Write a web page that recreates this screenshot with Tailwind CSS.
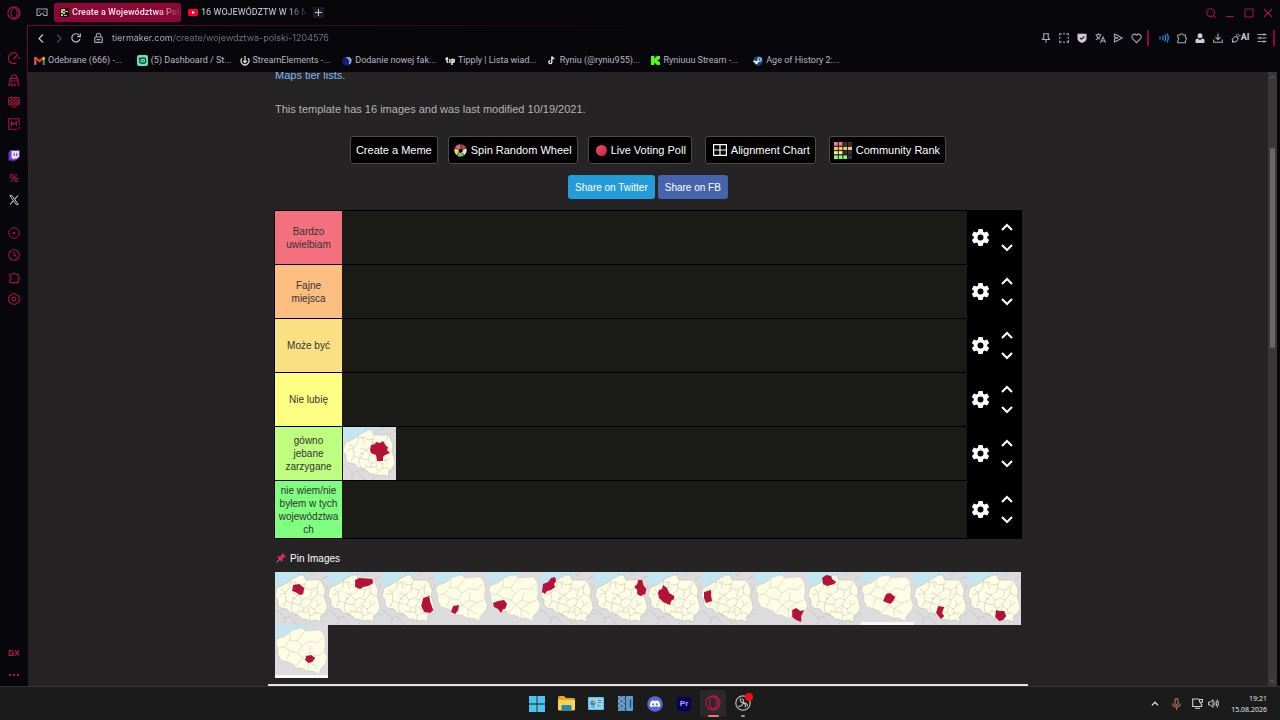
<!DOCTYPE html>
<html lang="pl">
<head>
    <meta charset="UTF-8">
    <meta name="viewport" content="width=device-width, initial-scale=1.0">
    <title>Create a Województwa Polski Tier List</title>
    <script src="https://cdn.jsdelivr.net/npm/@tailwindcss/browser@4"></script>
</head>
<body class="h-screen flex flex-col overflow-hidden bg-[#07060b] font-['Liberation_Sans',Arial,sans-serif]">

    <!-- Shared shapes -->
    <svg class="hidden" aria-hidden="true">
        <symbol id="opera" viewBox="0 0 16 16">
            <g fill="none" stroke="currentColor"><circle cx="8" cy="8" r="7" stroke-width="1.3"/><ellipse cx="8" cy="8" rx="3.4" ry="6" stroke-width="1.2"/><path d="M9 1.3c3 1 4.5 3.500 4.500 6.700S12 13.700 9 14.700" stroke-width="1"/></g>
        </symbol>
        <symbol id="puzzle" viewBox="0 0 14 14">
            <path d="M2 3.500h2.700a2 2 0 0 1 3.800 0H11v2.700a2 2 0 0 1 0 3.600v2.700H2V9.800a1.900 1.900 0 0 0 0-3.600z" fill="none" stroke="currentColor" stroke-width="1.200" stroke-linejoin="round"/>
        </symbol>
        <symbol id="gear" viewBox="0 0 24 24">
            <path fill="currentColor" fill-rule="evenodd" d="M9 0h6l.700 3.800 2 1.100L21.400 3.600l2.900 5-2.900 2.500v2l2.900 2.400-2.900 5-3.700-1.300-2 1.100L15 24H9l-.700-3.700-2-1.100-3.700 1.300-2.900-5L2.600 13v-2L-.3 8.600l2.900-5 3.700 1.300 2-1.100zM12 7.800a4.200 4.200 0 1 0 0 8.400 4.200 4.200 0 0 0 0-8.400z"/>
        </symbol>
        <symbol id="up" viewBox="0 0 12 8"><path d="M1 7l5-5 5 5" fill="none" stroke="currentColor" stroke-width="2"/></symbol>
        <symbol id="down" viewBox="0 0 12 8"><path d="M1 1l5 5 5-5" fill="none" stroke="currentColor" stroke-width="2"/></symbol>
        <symbol id="map" viewBox="0 0 53 53" preserveAspectRatio="none">
            <path fill="#dcdcde" d="M0 0h53v53H0z"/>
            <path fill="#c3e6f3" d="M0 0h36l-3 3-5-1-9 4-8 5-11 2z"/>
            <path fill="none" stroke="#b9b9bd" stroke-width=".5" d="M0 38l5 3 4 5 6-2 7 9M29 53l3-3M35 4l6-4M46 7l7-3M51 18l2-6M8 53l3-7M50 43l3-2"/>
            <path fill="#fdfde6" stroke="#a9a99c" stroke-width=".4" d="M2 16l8-4 9-6 6-3 4 0 1 4 3 1 12 0 2 3 3 7-1 6 2 7 1 5-2 4-5 5 1 5-5-2-6 1-5-2-3 0-3-3-5-3-4 0-3-4-6-1-3-3 0-5-3-4 1-4z"/>
            <path fill="none" stroke="#aaa99a" stroke-width=".5" stroke-dasharray="1.600 .6" d="M15 9l0 6-5 6-6 2M15 11l6-1 3 3 6-1 2-4M30 12l-1 7-6 4-6-2M29 16l7 2 6-3 3-6M42 15l0 6 7 4M10 21l1 8 6 2 2-5 4-3M11 29l-3 6M17 31l-1 5 2 5M23 23l4 5-2 5-8-2M27 28l5-2 5 2 4-5 2-2M25 33l4 3 5-2 3-6M29 36l-2 4-4-1-3 5M27 40l6 0 2 4-1 5M34 34l5 3 1 4-5 3M39 37l4-4-2-5M40 41l5 0 3 4M20 10l1 7M6 17l5 4M21 27l-4-1M37 18l-2 7M33 36l1 4M47 31l-5 3"/>
        </symbol>
        <symbol id="map-wide" viewBox="0 0 53 53" preserveAspectRatio="none">
            <path fill="#dcdcde" d="M0 0h53v53H0z"/>
            <path fill="#c3e6f3" d="M0 0h34l-4 3-11 2-9 4-10 2z"/>
            <path fill="#fdfde6" stroke="#bebdad" stroke-width=".3" d="M2 14l8-3 8-6 8-2 5 3 14-1 4 5 1 10-1 6 3 7-2 6-5 5-1 5-6-3-6 0-5-3-5 0-4-4-7-3-5-1-3-6 0-6-2-5z"/>
            <path fill="none" stroke="#d0ceba" stroke-width=".6" d="M15 8l0 7-6 7-5 1M15 15l7 1 4-5 4-5M22 16l5 5-4 7-8-2-6-4M27 21l7-5 8 2 5-6M34 28l7 3 7-3M23 28l4 5 7-5 1-7M15 26l-3 8M27 33l-6 8M27 33l6 4 8-6M33 37l0 8M33 37l9 5"/>
        </symbol>
    </svg>

    <div class="flex flex-1 min-h-0">

        <!-- Opera sidebar -->
        <aside class="w-7 shrink-0 flex flex-col items-center text-[#a51640]">
            <button aria-label="Opera menu" class="h-[25px] flex items-center"><svg class="size-[14px]"><use href="#opera"/></svg></button>
            <nav class="flex-1 flex flex-col items-center pt-[22px]">
                <button aria-label="Speed dial" class="h-[22px] flex items-center"><svg class="size-3" viewBox="0 0 12 12" fill="none" stroke="currentColor" stroke-width="1.100"><path d="M9 1.900A5.300 5.300 0 1 0 8.500 10.800M5 7l5-4.500M11.200 5v2"/></svg></button>
                <button aria-label="GX Cleaner" class="h-[22px] flex items-center"><svg class="size-3" viewBox="0 0 12 12" fill="none" stroke="currentColor" stroke-width="1.100"><path d="M3 4.500L4 1h4l1 3.500M2 4.500h8v2.500H2zM2 7L.8 11.200H8M10 7l1 4.200M4 9v2M7 9v2M9.500 11.200h2"/></svg></button>
                <button aria-label="Wallpaper" class="h-[22px] flex items-center"><svg class="size-3" viewBox="0 0 12 12" fill="none" stroke="currentColor" stroke-width="1.100"><rect x=".7" y="1.500" width="10.600" height="7.500" rx="1"/><path d="M1 6l4-4M2 8.500L8.500 2M5 8.500L11 3M8 8.500l3-2.500M3.500 11h5"/></svg></button>
                <button aria-label="Mods" class="h-[22px] flex items-center"><svg class="size-3" viewBox="0 0 12 12" fill="none" stroke="currentColor" stroke-width="1.100"><path d="M9 11.300H.8V.8h10.400V7M11.200 9v2.300M3.500 8V4l2.500 2.500L8.500 4v4"/></svg></button>
                <button aria-label="Twitch" class="h-[22px] mt-[10px] flex items-center"><svg class="size-3" viewBox="0 0 12 12"><path fill="#6b35d0" d="M2.500 0H12v7L8 10.500H6L4.500 12v-1.500H.5v-8z"/><path fill="#ece6fa" d="M3.500 1h7.500v5.500L9 8.500H7L5.500 10V8.500h-2z"/><path stroke="#6b35d0" stroke-width="1.100" d="M6.200 3v3M8.800 3v3"/></svg></button>
                <button aria-label="Deals" class="h-[22px] flex items-center"><svg class="size-[10px]" viewBox="0 0 12 12" fill="none" stroke="currentColor" stroke-width="1.300"><circle cx="3.300" cy="3.600" r="2"/><circle cx="8.700" cy="8.400" r="2"/><path d="M9.500 1.500l-7 9"/></svg></button>
                <button aria-label="X" class="h-[22px] flex items-center"><svg class="size-[10px]" viewBox="0 0 12 12" fill="none" stroke="#c9c9cd"><path d="M1 .8h2.600l7.500 10.400H8.500z" stroke-width="1.200"/><path d="M10.800.6L6.900 5M5.200 7L1.200 11.400" stroke-width="1.300"/></svg></button>
                <button aria-label="Player" class="h-[22px] mt-[11px] flex items-center"><svg class="size-3" viewBox="0 0 12 12"><circle cx="6" cy="6" r="5.300" fill="none" stroke="currentColor"/><circle cx="6" cy="6" r="1.300" fill="currentColor"/></svg></button>
                <button aria-label="History" class="h-[22px] flex items-center"><svg class="size-3" viewBox="0 0 12 12" fill="none" stroke="currentColor" stroke-width="1.100"><circle cx="6" cy="6" r="5.300"/><path d="M6 2.500V6l2.500 1.500"/></svg></button>
                <button aria-label="Extensions" class="h-[22px] flex items-center"><svg class="size-[13px]"><use href="#puzzle"/></svg></button>
                <button aria-label="Settings" class="h-[22px] flex items-center"><svg class="size-3" viewBox="0 0 12 12" fill="none" stroke="currentColor" stroke-width="1.100"><path d="M4.500.7h3l1 1.400 1.700.2 1.300 2.400L11 6l.5 1.300-1.300 2.400-1.700.2-1 1.400h-3l-1-1.400-1.700-.2L.5 7.300 1 6 .5 4.700l1.300-2.400 1.700-.2z"/><circle cx="6" cy="6" r="1.900"/></svg></button>
            </nav>
            <button aria-label="GX Corner" class="h-[22px] flex items-center"><svg class="w-3 h-2" viewBox="0 0 12 8" fill="none" stroke="currentColor" stroke-width="1.300"><path d="M5.500 1.700H1.200v4.600h4V4H3.500M7 1.500l4 5M11 1.500l-4 5"/></svg></button>
            <button aria-label="More" class="h-[22px] flex items-center gap-[2px]"><span class="size-[2px] bg-current"></span><span class="size-[2px] bg-current"></span><span class="size-[2px] bg-current"></span></button>
        </aside>
        <div class="w-px -ml-px mt-[25px] h-[170px] bg-[linear-gradient(180deg,#6e0b2d,transparent)]"></div>

        <div class="flex-1 min-w-0 flex flex-col font-[Roboto,Inter,sans-serif] text-[10px] text-[#b9b7c2]">

            <!-- Tabs -->
            <header class="h-[25px] shrink-0 flex items-center pl-[8px] pr-[7px]">
                <button aria-label="Workspace" class="w-3 mr-[6px]"><svg class="w-3 h-[9px]" viewBox="0 0 12 9" fill="none" stroke="#a5a3ae" stroke-width="1.100"><path d="M1 1h10v6.500H8L7 5.800H5L4 7.500H1zM3 3.800h1.500M7.500 3.800H9"/></svg></button>
                <button class="w-[127px] h-[19px] rounded-[2px] bg-[#8b0736] flex items-center gap-[3px] pl-[6px] pr-px overflow-hidden">
                    <svg class="size-[9px] shrink-0" viewBox="0 0 9 9"><path fill="#151515" d="M0 0h9v9H0z"/><path fill="#ef7d70" d="M1 1h2v2H1z"/><path fill="#f1d07c" d="M3 1h2v2H3zM1 3h2v2H1zM5 3h3v1H5z"/><path fill="#9bdc78" d="M1 6h2v2H1zM3 4h2v2H3zM4 7h3v1H4z"/></svg>
                    <span class="whitespace-nowrap text-[9px] font-bold text-transparent bg-clip-text bg-[linear-gradient(90deg,#f0d9e1_85px,#f0d9e120_106px)]">Create a Województwa Pols</span>
                </button>
                <button class="w-[125px] h-[19px] flex items-center gap-[3px] pl-[7px] overflow-hidden">
                    <svg class="w-[10px] h-[7px] shrink-0" viewBox="0 0 10 7"><rect width="10" height="7" rx="1.500" fill="#ff0033"/><path d="M4 2l3 1.500L4 5z" fill="#fff"/></svg>
                    <span class="whitespace-nowrap text-[9px] font-medium text-transparent bg-clip-text bg-[linear-gradient(90deg,#b9b7c2_86px,#b9b7c220_105px)]">16 WOJEWÓDZTW W 16 M</span>
                </button>
                <button aria-label="New tab" class="size-[11px] ml-[7px] bg-[#1d1a26] flex items-center justify-center"><svg class="size-[7px]" viewBox="0 0 7 7"><path d="M3.500 0v7M0 3.500h7" stroke="#c5c3cd"/></svg></button>
                <div class="ml-auto flex items-center gap-[9px] text-[#a51640]">
                    <button aria-label="Search tabs"><svg class="size-[10px]" viewBox="0 0 10 10" fill="none" stroke="currentColor" stroke-width="1.100"><circle cx="4.600" cy="4.600" r="3.900"/><path d="M7.300 7.300l2.300 2.300"/></svg></button>
                    <button aria-label="Minimize"><svg class="size-[10px]" viewBox="0 0 10 10"><path d="M1 8.500h8" stroke="currentColor"/></svg></button>
                    <button aria-label="Maximize"><svg class="size-[10px]" viewBox="0 0 10 10"><path d="M1 1h8v8H1z" fill="none" stroke="currentColor"/></svg></button>
                    <button aria-label="Close"><svg class="size-[10px]" viewBox="0 0 10 10"><path d="M1 1l8 8M9 1L1 9" stroke="currentColor" stroke-width="1.100"/></svg></button>
                </div>
            </header>
            <div class="h-px shrink-0 bg-[linear-gradient(90deg,#6e0b2d,#3a0a1b_300px,transparent_670px)]"></div>

            <!-- Address bar -->
            <div class="h-[25px] shrink-0 flex items-center pl-[10px] pr-[5px] pb-px text-[#aaa8b3]">
                <button aria-label="Back" class="w-[10px]"><svg class="w-[6px] h-[9px]" viewBox="0 0 6 9"><path d="M5 .5l-4 4 4 4" fill="none" stroke="#c9c7d0" stroke-width="1.200"/></svg></button>
                <button aria-label="Forward" class="w-[10px] ml-[8px]" disabled><svg class="w-[6px] h-[9px]" viewBox="0 0 6 9"><path d="M1 .5l4 4-4 4" fill="none" stroke="#4b4954" stroke-width="1.200"/></svg></button>
                <button aria-label="Reload" class="ml-[5px]"><svg class="size-[10px]" viewBox="0 0 10 10" fill="none" stroke="#c0bec8" stroke-width="1.200"><path d="M8.900 6A4.100 4.100 0 1 1 8.200 2.300M9.300.5v3.200H6.200"/></svg></button>
                <button aria-label="Site information" class="ml-[13px]"><svg class="w-[9px] h-[10px]" viewBox="0 0 9 10" fill="none" stroke="currentColor" stroke-width="1.100"><rect x=".7" y="4" width="7.600" height="5.400" rx="1"/><path d="M2.300 4V2.500a2.200 2 0 0 1 4.400 0V4M2.500 6.600h4"/></svg></button>
                <input aria-label="Address" value="tiermaker.com/create/wojewdztwa-polski-1204576" class="flex-1 min-w-0 ml-[9px] outline-none font-[Inter,sans-serif] text-[9px] text-transparent bg-clip-text bg-[linear-gradient(90deg,#b9b7c2_61px,#777384_61px)]">
                <div class="flex items-center [&>button]:w-[18px] [&>button]:flex [&>button]:justify-center">
                    <button aria-label="Pin"><svg class="size-[10px]" viewBox="0 0 10 10" fill="none" stroke="currentColor" stroke-width="1.100"><path d="M2 .8h6M2.800 1v3.500L1.500 6.500h7L7.200 4.500V1M5 6.500v3.300"/></svg></button>
                    <button aria-label="Snapshot"><svg class="size-[10px]" viewBox="0 0 10 10" fill="none" stroke="currentColor" stroke-width="1.100"><path d="M.7 2.500V.7h2M4 .7h2M7.300.7h2v1.800M9.300 4v2M.7 4v2M.7 7.500v1.800h2M4 9.300h2M9.300 7v3M7.500 9h2.500"/></svg></button>
                    <button aria-label="Ad blocker"><svg class="size-[10px]" viewBox="0 0 10 10"><path fill="#cfc8de" d="M.5.8h9v4.500C9.500 7.800 7.500 9.300 5 10 2.500 9.300.5 7.800.5 5.300z"/><path d="M3 4.800l1.500 1.500L7.300 3.500" fill="none" stroke="#15121c" stroke-width="1.100"/></svg></button>
                    <button aria-label="Translate"><svg class="w-[11px] h-[10px]" viewBox="0 0 11 10" fill="none" stroke="currentColor" stroke-width="1.100"><path d="M.5 1.800h6M3.500.3v1.500M5.500 2C5 4.500 3 6 .8 6.800M1.500 2.500C2 4.300 3.500 5.700 5 6.300M5.500 9.700L8 4l2.500 5.700M6.300 8h3.400"/></svg></button>
                    <button aria-label="Send to My Flow"><svg class="size-[10px]" viewBox="0 0 10 10" fill="none" stroke="currentColor" stroke-width="1.100" stroke-linejoin="round"><path d="M1.500 1l7.800 4-7.800 4V5.800L5 5 1.500 4.200z"/></svg></button>
                    <button aria-label="Bookmark"><svg class="size-[11px]" viewBox="0 0 11 10" fill="none" stroke="currentColor" stroke-width="1.100"><path d="M5.500 9.200L1.500 5.200a2.600 2.600 0 0 1 4-3.500 2.600 2.600 0 0 1 4 3.500z"/></svg></button>
                    <span class="w-[2px] h-4 mx-[2px] bg-[#8b0736]"></span>
                    <button aria-label="Audio" class="ml-1"><svg class="size-[10px]" viewBox="0 0 10 10" fill="none" stroke="#2287dc" stroke-width="1.300"><path d="M1 3.500v3M3.500 2.800c.8 1.400.8 3 0 4.400M5.700 1.700c1.200 2 1.200 4.600 0 6.600M8 .7c1.600 2.600 1.600 6 0 8.600"/></svg></button>
                    <button aria-label="Extensions"><svg class="size-3"><use href="#puzzle"/></svg></button>
                    <button aria-label="Profile"><svg class="size-[10px]" viewBox="0 0 10 10" fill="#cfc8de"><circle cx="5" cy="2.800" r="2.500"/><path d="M.5 10V7.200Q.5 5.500 2.500 5.500L5 7l2.500-1.500q2 0 2 1.700V10z"/></svg></button>
                    <button aria-label="Downloads"><svg class="size-[10px]" viewBox="0 0 10 10" fill="none" stroke="currentColor" stroke-width="1.100"><path d="M5 .5v6M2.500 4.200L5 6.700l2.500-2.500M.7 6.500v2.800h8.600V6.500"/></svg></button>
                    <div class="w-[26px] flex justify-center"><button class="flex items-center text-[9px] font-bold text-[#cfcdd6]"><svg class="size-[10px]" viewBox="0 0 10 10" fill="none" stroke="currentColor"><path d="M4.500 3L1 6.500l1 .8-.8 2 2-.9.800 1L7.500 6zM6 4.500l2-2M7 1l.5 1M9.500 2.500L8.500 3M5.500 1.500v1"/></svg>AI</button></div>
                    <button aria-label="Easy setup"><svg class="size-[10px]" viewBox="0 0 10 10" fill="none" stroke="currentColor" stroke-width="1.100"><path d="M.5 1.500h9M.5 5h9M.5 8.500h9M7 .3v2.400M3 3.800v2.400M7 7.300v2.400"/></svg></button>
                    <span class="w-[2px] h-4 ml-[2px] bg-[#8b0736]"></span>
                </div>
            </div>

            <!-- Bookmarks -->
            <nav class="h-[21px] shrink-0 pl-[6px] pb-[2px]">
                <div class="h-full w-[822px] grid grid-cols-8 items-center whitespace-nowrap text-[9px]">
                    <a href="#" class="flex items-center gap-[3px]"><svg class="w-[11px] h-[9px]" viewBox="0 0 11 9" fill="none" stroke-width="2"><path d="M1.300 9V1.500" stroke="#4285f4"/><path d="M9.700 9V1.500" stroke="#34a853"/><path d="M1 1.300l4.500 3.800L10 1.300" stroke="#ea4335"/><path d="M9.700 1v3" stroke="#fbbc04"/><path d="M1.300 1v7" stroke="#e8493d"/></svg>Odebrane (666) -...</a>
                    <a href="#" class="flex items-center gap-[3px]"><svg class="size-[11px]" viewBox="0 0 11 11"><rect width="11" height="11" rx="2" fill="#5ee8b5"/><rect x="2.800" y="3.200" width="5.800" height="5" rx="1.500" fill="#5ee8b5" stroke="#0b2b24" stroke-width="1.200"/><path d="M1.500 3l2 1M5 5.300v1M6.700 5.300v1" stroke="#0b2b24"/></svg>(5) Dashboard / St...</a>
                    <a href="#" class="flex items-center gap-[3px]"><svg class="size-[10px]" viewBox="0 0 11 11" fill="none" stroke="#d8d8dc" stroke-width="1.400"><path d="M2.300 2.500a4.300 4.300 0 1 0 6.400 0M5.500 0v7M3.500 5.300l2 2 2-2"/></svg>StreamElements -...</a>
                    <a href="#" class="flex items-center gap-[3px]"><svg class="size-[10px]" viewBox="0 0 11 11"><circle cx="5" cy="6" r="4.800" fill="#141c7c"/><path d="M4 1.500C7 0 11 2 10.500 6 10 8.500 8 9.500 7 9c2-2 1-5-3-7.500z" fill="#86a9e8"/><path d="M7 1c2 .5 3.500 2 3.500 4L8.500 3z" fill="#f09a4a"/></svg>Dodanie nowej fak...</a>
                    <a href="#" class="flex items-center gap-[3px]"><svg class="w-[10px] h-2" viewBox="0 0 10 8" fill="none" stroke="#e9e9ee" stroke-width="1.500"><path d="M2 0v4.500q0 1 1.300 1M.3 2h3M4.900 2v4M7 8V2.500h1q1.300 0 1.300 1.300T8 5.200H7"/></svg>Tipply | Lista wiad...</a>
                    <a href="#" class="flex items-center gap-[4px]"><svg class="w-[8px] h-[9px]" viewBox="0 0 9 9" fill="none"><path d="M4.300 0v6.300a1.700 1.700 0 1 1-1.700-1.700M4.500.3q.5 2 2.700 2.300" stroke="#e9e9ee" stroke-width="1.500"/></svg>Ryniu (@ryniu955)...</a>
                    <a href="#" class="flex items-center gap-[4px]"><svg class="size-[9px]" viewBox="0 0 9 9"><path fill="#53fc18" d="M0 0h3.300v2.200h1V1.100h1.100V0H9v3H7.800v1H6.700v1h1.100v1H9v3H5.400V7.900H4.300V6.800h-1V9H0z"/></svg>Ryniuuu Stream -...</a>
                    <a href="#" class="flex items-center gap-[3px]"><svg class="size-[10px]" viewBox="0 0 11 11"><circle cx="5.500" cy="5.500" r="5.200" fill="#174a78"/><path d="M.5 5.500L4 7l3-2.500" stroke="#e6edf5" stroke-width="2" fill="none"/><circle cx="7.300" cy="3.800" r="1.900" fill="#174a78" stroke="#e6edf5" stroke-width="1.200"/><circle cx="3.800" cy="7.500" r="1.500" fill="#e6edf5"/></svg>Age of History 2:...</a>
                </div>
            </nav>

            <!-- Page -->
            <div class="flex-1 min-h-0 flex pr-[3px]">
                <main class="flex-1 min-w-0 overflow-hidden bg-[#252324] font-['Liberation_Sans',Arial,sans-serif] text-[11px] text-[#b6b4b4]">
                    <div class="max-w-[760px] mx-auto -mt-[5px] border-b-2 border-[#e4e4e4]">
                        <div class="px-[6px]">
                            <p class="pl-px leading-4 text-[#86b7f0]"><a href="#">Maps tier lists.</a></p>
                            <p class="mt-[18px] pl-px leading-4">This template has 16 images and was last modified 10/19/2021.</p>

                            <div class="mt-[19px] flex justify-center gap-[13px] text-white [&_button]:h-7 [&_button]:flex [&_button]:items-center [&_button]:rounded-[3px] [&_button]:border [&_button]:border-[#4a4a4a] [&_button]:bg-black [&_button]:whitespace-nowrap">
                                <div class="flex gap-[10px]">
                                    <button class="px-[5px]">Create a Meme</button>
                                    <button class="gap-[4px] px-[5px]">
                                        <svg class="size-[13px]" viewBox="0 0 14 14"><path fill="#e3697a" d="M7 .3Q2.500.3.800 4.500L5 7 9 4.500z"/><path fill="#f0cf72" d="M.8 4.500Q-.8 9.500 3.200 12.500L6 10 5 5.500z"/><path fill="#7cc06c" d="M3.200 12.500Q7 15.200 11 12.200L9.500 8.500 5 9z"/><path fill="#e8e6d0" d="M11 12.200Q15 8.500 13 4.200L9.300 5 9 10z"/><path fill="#b0484f" d="M13 4.200Q11.200.5 7 .3L6 4l4 2z"/><circle cx="7" cy="7.200" r="2.100" fill="#0b0808"/><path d="M7 .3L8.500 4.500M.8 4.500L5 5.500M3.200 12.500L5 9M11 12.200L9 9.500M13 4.200L9.500 6" stroke="#1a1010" stroke-width=".7"/></svg>
                                        Spin Random Wheel
                                    </button>
                                    <button class="gap-[4px] pl-[7px] pr-[5px]"><span class="size-[11px] rounded-full bg-[linear-gradient(135deg,#f0506a,#c41e48)]"></span>Live Voting Poll</button>
                                </div>
                                <button class="gap-[4px] pl-[7px] pr-[5px]">
                                    <svg class="w-[14px] h-3" viewBox="0 0 14 12" fill="none" stroke="#fff" stroke-width="1.200"><path d="M.6.6h12.800v10.800H.6zM7 .6v10.800M.6 6h12.800"/></svg>
                                    Alignment Chart
                                </button>
                                <button class="gap-[4px] pl-1 pr-[5px]">
                                    <svg class="w-[18px] h-[17px]" viewBox="0 0 18 17"><path fill="#333" d="M0 0h18v17H0z"/><path fill="#ef7b80" d="M0 0h9v4H0z"/><path fill="#f5bd85" d="M0 4.500h18v4H0z"/><path fill="#f6ee82" d="M0 9h9v3.500H0z"/><path fill="#8df47f" d="M0 13h13.500v4H0z"/><path d="M4.300 0v17M8.900 0v17M13.500 0v17M0 4.200h18M0 8.600h18M0 12.900h18" stroke="#111" stroke-width=".9"/></svg>
                                    Community Rank
                                </button>
                            </div>

                            <div class="mt-[11px] flex justify-center gap-[3px] text-[10px] text-white [&>button]:h-6 [&>button]:px-[7px] [&>button]:rounded-[3px]">
                                <button class="bg-[#259cda]">Share on Twitter</button>
                                <button class="bg-[#4664ad]">Share on FB</button>
                            </div>

                            <!-- Tiers -->
                            <div class="mt-[11px] border border-b-0 border-black bg-[#1a1a17] text-[10px] leading-[13px] text-[#333]">
                                <section class="flex min-h-[54px] border-b border-black">
                                    <h2 class="w-[67px] px-[2px] flex items-center justify-center text-center bg-[#f3717f]">Bardzo uwielbiam</h2>
                                    <div class="flex-1"></div>
                                    <div class="w-[54px] -mb-px pb-[2px] pl-[5px] flex items-center gap-3 bg-black text-white">
                                        <button aria-label="Row settings"><svg class="size-[17px] overflow-visible"><use href="#gear"/></svg></button>
                                        <div class="flex flex-col gap-[13px]"><button aria-label="Move up"><svg class="w-3 h-2"><use href="#up"/></svg></button><button aria-label="Move down"><svg class="w-3 h-2"><use href="#down"/></svg></button></div>
                                    </div>
                                </section>
                                <section class="flex min-h-[54px] border-b border-black">
                                    <h2 class="w-[67px] px-[2px] flex items-center justify-center text-center bg-[#fcbd80]"><span class="w-10">Fajne miejsca</span></h2>
                                    <div class="flex-1"></div>
                                    <div class="w-[54px] -mb-px pb-[2px] pl-[5px] flex items-center gap-3 bg-black text-white">
                                        <button aria-label="Row settings"><svg class="size-[17px] overflow-visible"><use href="#gear"/></svg></button>
                                        <div class="flex flex-col gap-[13px]"><button aria-label="Move up"><svg class="w-3 h-2"><use href="#up"/></svg></button><button aria-label="Move down"><svg class="w-3 h-2"><use href="#down"/></svg></button></div>
                                    </div>
                                </section>
                                <section class="flex min-h-[54px] border-b border-black">
                                    <h2 class="w-[67px] px-[2px] flex items-center justify-center text-center bg-[#f9e082]">Może być</h2>
                                    <div class="flex-1"></div>
                                    <div class="w-[54px] -mb-px pb-[2px] pl-[5px] flex items-center gap-3 bg-black text-white">
                                        <button aria-label="Row settings"><svg class="size-[17px] overflow-visible"><use href="#gear"/></svg></button>
                                        <div class="flex flex-col gap-[13px]"><button aria-label="Move up"><svg class="w-3 h-2"><use href="#up"/></svg></button><button aria-label="Move down"><svg class="w-3 h-2"><use href="#down"/></svg></button></div>
                                    </div>
                                </section>
                                <section class="flex min-h-[54px] border-b border-black">
                                    <h2 class="w-[67px] px-[2px] flex items-center justify-center text-center bg-[#fefe82]">Nie lubię</h2>
                                    <div class="flex-1"></div>
                                    <div class="w-[54px] -mb-px pb-[2px] pl-[5px] flex items-center gap-3 bg-black text-white">
                                        <button aria-label="Row settings"><svg class="size-[17px] overflow-visible"><use href="#gear"/></svg></button>
                                        <div class="flex flex-col gap-[13px]"><button aria-label="Move up"><svg class="w-3 h-2"><use href="#up"/></svg></button><button aria-label="Move down"><svg class="w-3 h-2"><use href="#down"/></svg></button></div>
                                    </div>
                                </section>
                                <section class="flex min-h-[54px] border-b border-black">
                                    <h2 class="w-[67px] px-[2px] flex items-center justify-center text-center bg-[#c0fe80]"><span class="w-12">gówno jebane zarzygane</span></h2>
                                    <div class="flex-1 pl-px">
                                        <svg class="size-[53px]" viewBox="0 0 53 53"><use href="#map"/><path fill="#b51237" d="M28 18l4-1 1-2 4 1 3-2 3 5 2 1-1 3 3 3-5 2-2 2 0 4-6 0-1-6-5-2-1-3z"/></svg>
                                    </div>
                                    <div class="w-[54px] -mb-px pb-[2px] pl-[5px] flex items-center gap-3 bg-black text-white">
                                        <button aria-label="Row settings"><svg class="size-[17px] overflow-visible"><use href="#gear"/></svg></button>
                                        <div class="flex flex-col gap-[13px]"><button aria-label="Move up"><svg class="w-3 h-2"><use href="#up"/></svg></button><button aria-label="Move down"><svg class="w-3 h-2"><use href="#down"/></svg></button></div>
                                    </div>
                                </section>
                                <section class="flex min-h-[58px] border-b border-black">
                                    <h2 class="w-[67px] px-[2px] flex items-center justify-center text-center bg-[#80fe80]"><span class="w-full wrap-break-word">nie wiem/nie byłem w tych województwach</span></h2>
                                    <div class="flex-1"></div>
                                    <div class="w-[54px] pb-px pl-[5px] flex items-center gap-3 bg-black text-white">
                                        <button aria-label="Row settings"><svg class="size-[17px] overflow-visible"><use href="#gear"/></svg></button>
                                        <div class="flex flex-col gap-[13px]"><button aria-label="Move up"><svg class="w-3 h-2"><use href="#up"/></svg></button><button aria-label="Move down"><svg class="w-3 h-2"><use href="#down"/></svg></button></div>
                                    </div>
                                </section>
                            </div>

                            <button class="mt-[11px] ml-[2px] h-4 flex items-center gap-1 text-[10px] text-white">
                                <svg class="size-[10px]" viewBox="0 0 10 10"><path d="M.5 9.500L4 6" stroke="#a9a9b0"/><path fill="#dd2e55" d="M6.200 0L10 3.800l-1 .5-.8-.2L6.600 5.700 6.700 8l-.9.7L1.300 4.200 2 3.300l2.300.1L5.900 1.800 5.700 1z"/></svg>
                                Pin Images
                            </button>

                            <!-- Unranked images -->
                            <div class="mx-px mt-[6px] mb-[6px] grid grid-cols-14 [&>svg]:w-full [&>svg]:h-[53px] [&>svg]:bg-[#dcdcde]">
                                <svg viewBox="0 0 53 53" preserveAspectRatio="none"><use href="#map"/><path fill="#b51237" d="M18 13l6-1 5 4-1 6-3 1-5-3-3-1z"/></svg>
                                <svg viewBox="0 0 53 53" preserveAspectRatio="none"><use href="#map"/><path fill="#b51237" d="M27 8l4-2 13 1 1 4-5 3-5 1-3 2-5-2z"/></svg>
                                <svg viewBox="0 0 53 53" preserveAspectRatio="none"><use href="#map"/><path fill="#b51237" d="M41 26l6-2 1 6 3 8-3 3-6-1-3-6z"/></svg>
                                <svg viewBox="0 0 53 53" preserveAspectRatio="none"><use href="#map-wide"/><path fill="#b51237" d="M18 34l6-1-1 5-3 4-4-2z"/></svg>
                                <svg viewBox="0 0 53 53" preserveAspectRatio="none"><use href="#map-wide"/><path fill="#b51237" d="M5 31l5-2 6-1 3 4-2 5-2 0-2 4-3-4-4-2z"/></svg>
                                <svg viewBox="0 0 53 53" preserveAspectRatio="none"><use href="#map"/><path fill="#b51237" d="M2 12l5-2 3-4 4-1 1 4-2 3 1 3-4 3-4 1-2 3-3-2z"/></svg>
                                <svg viewBox="0 0 53 53" preserveAspectRatio="none"><use href="#map"/><path fill="#b51237" d="M43 8l4 0 1 5 3 4-1 5-5 2-3-2 0-4-3-3 3-3z"/></svg>
                                <svg viewBox="0 0 53 53" preserveAspectRatio="none"><use href="#map"/><path fill="#b51237" d="M11 18l3-1 1-4 4 3 2 5 5 3 0 3-3 2-1 4-7-3-4-4-1-5z"/></svg>
                                <svg viewBox="0 0 53 53" preserveAspectRatio="none"><use href="#map"/><path fill="#b51237" d="M3 20l7-2 0 6 1 5-6 2-2-5z"/></svg>
                                <svg viewBox="0 0 53 53" preserveAspectRatio="none"><use href="#map-wide"/><path fill="#b51237" d="M37 38l4-2 4 3 4-1-3 6 0 6-5-2-4-3z"/></svg>
                                <svg viewBox="0 0 53 53" preserveAspectRatio="none"><use href="#map"/><path fill="#b51237" d="M14 6l4-3 5 1 1 3 4 3-2 2-7 2-4-2z"/></svg>
                                <svg viewBox="0 0 53 53" preserveAspectRatio="none"><use href="#map-wide"/><path fill="#b51237" d="M25 22l4-1 5 4-2 4-3 3-7-3z"/><path fill="#f8f8f8" d="M0 50h53v3H0z"/></svg>
                                <svg viewBox="0 0 53 53" preserveAspectRatio="none"><use href="#map"/><path fill="#b51237" d="M24 34l6 1-2 6 2 3-3 3-5-6z"/></svg>
                                <svg viewBox="0 0 53 53" preserveAspectRatio="none"><use href="#map"/><path fill="#b51237" d="M28 38l3 1 5 0 2 5-3 4-4 1-4-4z"/></svg>
                                <svg viewBox="0 0 53 53" preserveAspectRatio="none"><use href="#map-wide"/><path fill="#b51237" d="M31 31l5-1 4 3-3 4-4 1-3-3z"/><path fill="#f8f8f8" d="M0 50h53v3H0z"/></svg>
                            </div>
                        </div>
                    </div>
                </main>
                <div class="w-[9px] shrink-0 flex flex-col items-center bg-[#3a3839] text-[#777] py-[3px]">
                    <svg class="w-[5px] h-1"><use href="#up"/></svg>
                    <div class="w-[5px] h-[200px] mt-[69px] rounded-[2px] bg-[#6a6869]"></div>
                    <svg class="w-[5px] h-1 mt-auto"><use href="#down"/></svg>
                </div>
            </div>
        </div>
    </div>

    <!-- Taskbar -->
    <footer class="h-[34px] shrink-0 grid grid-cols-[1fr_235px_1fr] items-center border-t border-[#333] bg-[#1b1b1b]">
        <div></div>
        <div class="h-full grid grid-cols-8 items-center justify-items-center">
            <button aria-label="Start"><svg class="size-4" viewBox="0 0 16 16"><path fill="#4cc4ef" d="M0 0h7.600v7.600H0zM8.400 0H16v7.600H8.400zM0 8.400h7.600V16H0zM8.400 8.400H16V16H8.400z"/></svg></button>
            <button aria-label="File Explorer"><svg class="w-[17px] h-[15px]" viewBox="0 0 17 15"><path fill="#e3a62c" d="M0 1.500Q0 0 1.500 0H6l2 2h7.500Q17 2 17 3.500V13H0z"/><path fill="#fbd34f" d="M0 4h17v9.500q0 1-1.500 1h-14Q0 14.500 0 13.500z"/><path fill="#2787b8" d="M3.500 10q0-1 1-1h8q1 0 1 1v4.500h-10z"/></svg></button>
            <button aria-label="Control Panel"><svg class="w-4 h-[13px]" viewBox="0 0 16 13"><rect width="16" height="13" rx="1" fill="#69c6ea"/><path fill="#a5dbf2" d="M1.500 1.500h13v10h-13z"/><circle cx="5" cy="6" r="2.700" fill="#2f8fc6"/><path fill="#e9a13b" d="M5 6V3.300A2.700 2.700 0 0 1 7.700 6z"/><path stroke="#2f8fc6" d="M9.500 3.500h4M9.500 5.500h4M3 10h4M9 9h4"/><path stroke="#e9a13b" d="M9 7.500h2"/></svg></button>
            <button aria-label="Registry Editor"><svg class="size-[15px]" viewBox="0 0 15 15"><rect width="7.500" height="15" rx="1" fill="#4d7ba5"/><path d="M0 0l7 5M7 0L0 5M0 5l7 5M7 5l-7 5M0 10l7 5M7 10l-7 5" stroke="#8fb9dc"/><rect x="8" width="7" height="15" rx="1" fill="#5d9dcd"/><path d="M12.500 3.500v8" stroke="#20496b" stroke-width="1.300"/></svg></button>
            <button aria-label="Discord"><svg class="size-4" viewBox="0 0 16 16"><circle cx="8" cy="8" r="7.800" fill="#5865d8"/><path fill="#fff" d="M5.500 4.500L7 4.800h2l1.500-.3 1.500.7q1.300 2.500 1.200 5l-2 1.100-.8-1Q8 11 5.600 10.300l-.8 1-2-1.100q0-2.700 1.200-5z"/><circle cx="6.200" cy="8.300" r="1.100" fill="#5865d8"/><circle cx="9.800" cy="8.300" r="1.100" fill="#5865d8"/></svg></button>
            <button aria-label="Premiere Pro" class="size-[14px] rounded-[3px] bg-[#0a0058] text-[8px] leading-[14px] font-bold text-[#b7a6ff]">Pr</button>
            <button aria-label="Opera GX" class="w-[26px] h-[27px] rounded-[3px] bg-[#2a2829] flex flex-col items-center justify-between pt-[5px] text-[#b5174a]">
                <svg class="size-4"><use href="#opera"/></svg>
                <span class="w-[11px] h-[2px] rounded-full bg-[#e0805f]"></span>
            </button>
            <button aria-label="OBS Studio" class="relative h-[27px] flex flex-col items-center justify-between pt-[5px]">
                <svg class="size-4" viewBox="0 0 16 16" fill="none" stroke="#b9b9b9" stroke-width="1.200"><circle cx="8" cy="8" r="7.200"/><path d="M8 8C5.500 7.500 4.500 5 6 3M8 8c2.600-.4 4.800 1 4.600 3.500M8 8c-.4 2.600-2.600 4-4.900 3M8 8.200c1-2 .5-4-1-4.500M8 8.200c2 .2 3 2 2.300 4.300"/></svg>
                <span class="w-[4px] h-[2px] rounded-full bg-[#9a9a9a]"></span>
                <span class="absolute top-[3px] -right-[2px] size-2 rounded-full bg-[#ee1111]"></span>
            </button>
        </div>
        <div class="flex items-center justify-end pr-[13px] text-[#e2e2e2]">
            <button aria-label="Hidden icons" class="mr-[13px]"><svg class="w-2 h-[5px]"><use href="#up"/></svg></button>
            <button aria-label="Microphone" class="mr-[11px]"><svg class="w-[9px] h-3" viewBox="0 0 9 12" fill="none" stroke="#b87a5c" stroke-width="1.100"><rect x="3" y=".6" width="3" height="6.500" rx="1.500"/><path d="M.8 5.500q0 3.500 3.700 3.500t3.700-3.500M4.500 9v2.800"/></svg></button>
            <button aria-label="Network" class="mr-[5px]"><svg class="w-[11px] h-[11px]" viewBox="0 0 11 11" fill="none" stroke="#d2d2d2" stroke-width="1.100"><path d="M7 1H.7v7.500h9V6M3 10.300h5M7.500 1.500h3v2q0 1-1.500 1t-1.500-1zM9 4.500v2"/></svg></button>
            <button aria-label="Volume" class="mr-[12px]"><svg class="w-[11px] h-[11px]" viewBox="0 0 11 11" fill="none" stroke="#d2d2d2"><path d="M.6 4v3h1.700L5 9.300V1.700L2.300 4zM6.500 4q1 1.500 0 3M8 2.700q1.800 2.800 0 5.600M9.300 1.500q2.500 4 0 8"/></svg></button>
            <time class="font-['Noto_Sans',sans-serif] text-[7px] leading-[11px] text-right">19:21<br>15.08.2026</time>
        </div>
    </footer>
</body>
</html>
